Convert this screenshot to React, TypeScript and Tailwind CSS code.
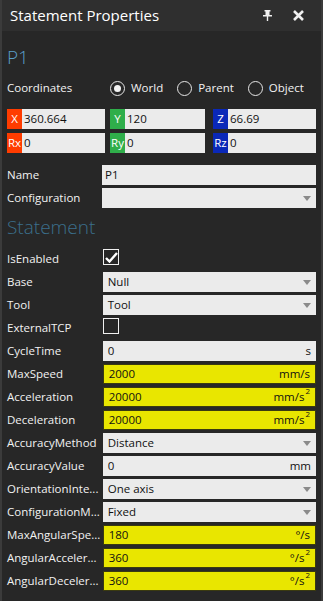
import React from 'react';

type Row =
  | { kind: 'check'; label: string; checked: boolean }
  | { kind: 'select'; label: string; value: string }
  | { kind: 'value'; label: string; value: string; unit: string; sq?: boolean; hot?: boolean };

const rows: Row[] = [
  { kind: 'check', label: 'IsEnabled', checked: true },
  { kind: 'select', label: 'Base', value: 'Null' },
  { kind: 'select', label: 'Tool', value: 'Tool' },
  { kind: 'check', label: 'ExternalTCP', checked: false },
  { kind: 'value', label: 'CycleTime', value: '0', unit: 's' },
  { kind: 'value', label: 'MaxSpeed', value: '2000', unit: 'mm/s', hot: true },
  { kind: 'value', label: 'Acceleration', value: '20000', unit: 'mm/s', sq: true, hot: true },
  { kind: 'value', label: 'Deceleration', value: '20000', unit: 'mm/s', sq: true, hot: true },
  { kind: 'select', label: 'AccuracyMethod', value: 'Distance' },
  { kind: 'value', label: 'AccuracyValue', value: '0', unit: 'mm' },
  { kind: 'select', label: 'OrientationInte...', value: 'One axis' },
  { kind: 'select', label: 'ConfigurationM...', value: 'Fixed' },
  { kind: 'value', label: 'MaxAngularSpe...', value: '180', unit: '°/s', hot: true },
  { kind: 'value', label: 'AngularAcceler...', value: '360', unit: '°/s', sq: true, hot: true },
  { kind: 'value', label: 'AngularDeceler...', value: '360', unit: '°/s', sq: true, hot: true },
];

const Arrow = () => (
  <svg width="8" height="5" viewBox="0 0 8 5" className="shrink-0">
    <path d="M0 0 H8 L4 5 Z" fill="#8a8a8a" />
  </svg>
);

const Radio = ({ on, label }: { on: boolean; label: string }) => (
  <div className="flex items-center gap-[6px]">
    <span className="w-[15px] h-[15px] rounded-full border border-[#e6e6e6] flex items-center justify-center">
      {on && <span className="w-[7px] h-[7px] rounded-full bg-[#f2f2f2]" />}
    </span>
    <span>{label}</span>
  </div>
);

const Check = ({ on }: { on: boolean }) => (
  <span className="w-[16px] h-[16px] border border-[#f0f0f0] flex items-center justify-center">
    {on && (
      <svg width="13" height="11" viewBox="0 0 13 11">
        <path d="M1 6 L4.5 9.5 L12 1" fill="none" stroke="#ffffff" strokeWidth="2.4" />
      </svg>
    )}
  </span>
);

const Coord = ({ tag, color, value, w }: { tag: string; color: string; value: string; w: string }) => (
  <div className={`flex h-[20px] bg-[#ebebeb] ${w}`}>
    <span className={`w-[15px] flex items-center justify-center text-white ${color}`}>{tag}</span>
    <span className="pl-[2px] text-[#111] leading-[20px]">{value}</span>
  </div>
);

const Field = ({ row }: { row: Row }) => {
  if (row.kind === 'check') {
    return (
      <div className="h-[20px] flex items-start">
        <Check on={row.checked} />
      </div>
    );
  }
  if (row.kind === 'select') {
    return (
      <div className="h-[20px] w-[214px] bg-[#ebebeb] flex items-center justify-between pl-[5px] pr-[5px] text-[#111]">
        <span>{row.value}</span>
        <Arrow />
      </div>
    );
  }
  return (
    <div
      className={`h-[20px] w-[214px] flex items-center justify-between pl-[5px] pr-[5px] text-[#111] ${
        row.hot ? 'bg-[#e9e600] border border-[#3a3a10]' : 'bg-[#ebebeb]'
      }`}
    >
      <span>{row.value}</span>
      <span className="flex items-start">
        {row.unit}
        {row.sq && <span className="text-[8px] leading-none mt-[-1px] ml-[1px]">2</span>}
      </span>
    </div>
  );
};

export default function App() {
  return (
    <div
      className="w-[323px] h-[601px] bg-[#272727] border-l-2 border-r-2 border-[#3b3b3b] flex flex-col text-[#f2f2f2] text-[11.5px] overflow-hidden"
      style={{ fontFamily: '"Open Sans", "Noto Sans", sans-serif' }}
    >
      {/* title bar */}
      <div className="h-[31px] bg-[#2f2f2f] flex items-center pl-[8px] pr-[17px] shrink-0">
        <span className="text-[15px] text-white flex-1">Statement Properties</span>
        <svg width="9" height="11" viewBox="0 0 9 11" className="mr-[21px]">
          <path d="M1.5 0 H7.5 V1.5 H6.5 V5 H9 V6.5 H5.2 V11 H3.8 V6.5 H0 V5 H2.5 V1.5 H1.5 Z" fill="#f0f0f0" />
        </svg>
        <svg width="11" height="11" viewBox="0 0 11 11">
          <path d="M1 1 L10 10 M10 1 L1 10" stroke="#f0f0f0" strokeWidth="2.6" />
        </svg>
      </div>

      <div className="pl-[5px] pr-[5px]">
        <div className="text-[19px] font-light text-[#5a9dc6] mt-[14px] leading-[24px]">P1</div>

        <div className="flex items-center h-[20px] mt-[9px]">
          <span className="w-[103px]">Coordinates</span>
          <div className="flex items-center gap-[14px]">
            <Radio on label="World" />
            <Radio on={false} label="Parent" />
            <Radio on={false} label="Object" />
          </div>
        </div>

        <div className="mt-[11px] flex flex-col gap-[4px]">
          <div className="flex">
            <Coord tag="X" color="bg-[#ff3c00]" value="360.664" w="w-[98px]" />
            <Coord tag="Y" color="bg-[#2fae4a]" value="120" w="w-[95px] ml-[5px]" />
            <Coord tag="Z" color="bg-[#0a28b8]" value="66.69" w="w-[103px] ml-[8px]" />
          </div>
          <div className="flex">
            <Coord tag="Rx" color="bg-[#ff3c00]" value="0" w="w-[98px]" />
            <Coord tag="Ry" color="bg-[#2fae4a]" value="0" w="w-[95px] ml-[5px]" />
            <Coord tag="Rz" color="bg-[#0a28b8]" value="0" w="w-[103px] ml-[8px]" />
          </div>
        </div>

        <div className="mt-[12px] flex flex-col gap-[3px]">
          <div className="flex items-center">
            <span className="w-[95px]">Name</span>
            <div className="h-[20px] w-[214px] bg-[#ebebeb] text-[#111] pl-[3px] leading-[20px]">P1</div>
          </div>
          <div className="flex items-center">
            <span className="w-[95px]">Configuration</span>
            <div className="h-[20px] w-[214px] bg-[#ebebeb] flex items-center justify-end pr-[5px]">
              <Arrow />
            </div>
          </div>
        </div>

        <div className="text-[19px] font-light text-[#3b6f8c] mt-[7px] leading-[24px]">Statement</div>

        <div className="mt-[10px] flex flex-col gap-[3px]">
          {rows.map((r) => (
            <div key={r.label} className="flex items-center">
              <span className="w-[96px] whitespace-nowrap">{r.label}</span>
              <Field row={r} />
            </div>
          ))}
        </div>
      </div>
    </div>
  );
}
